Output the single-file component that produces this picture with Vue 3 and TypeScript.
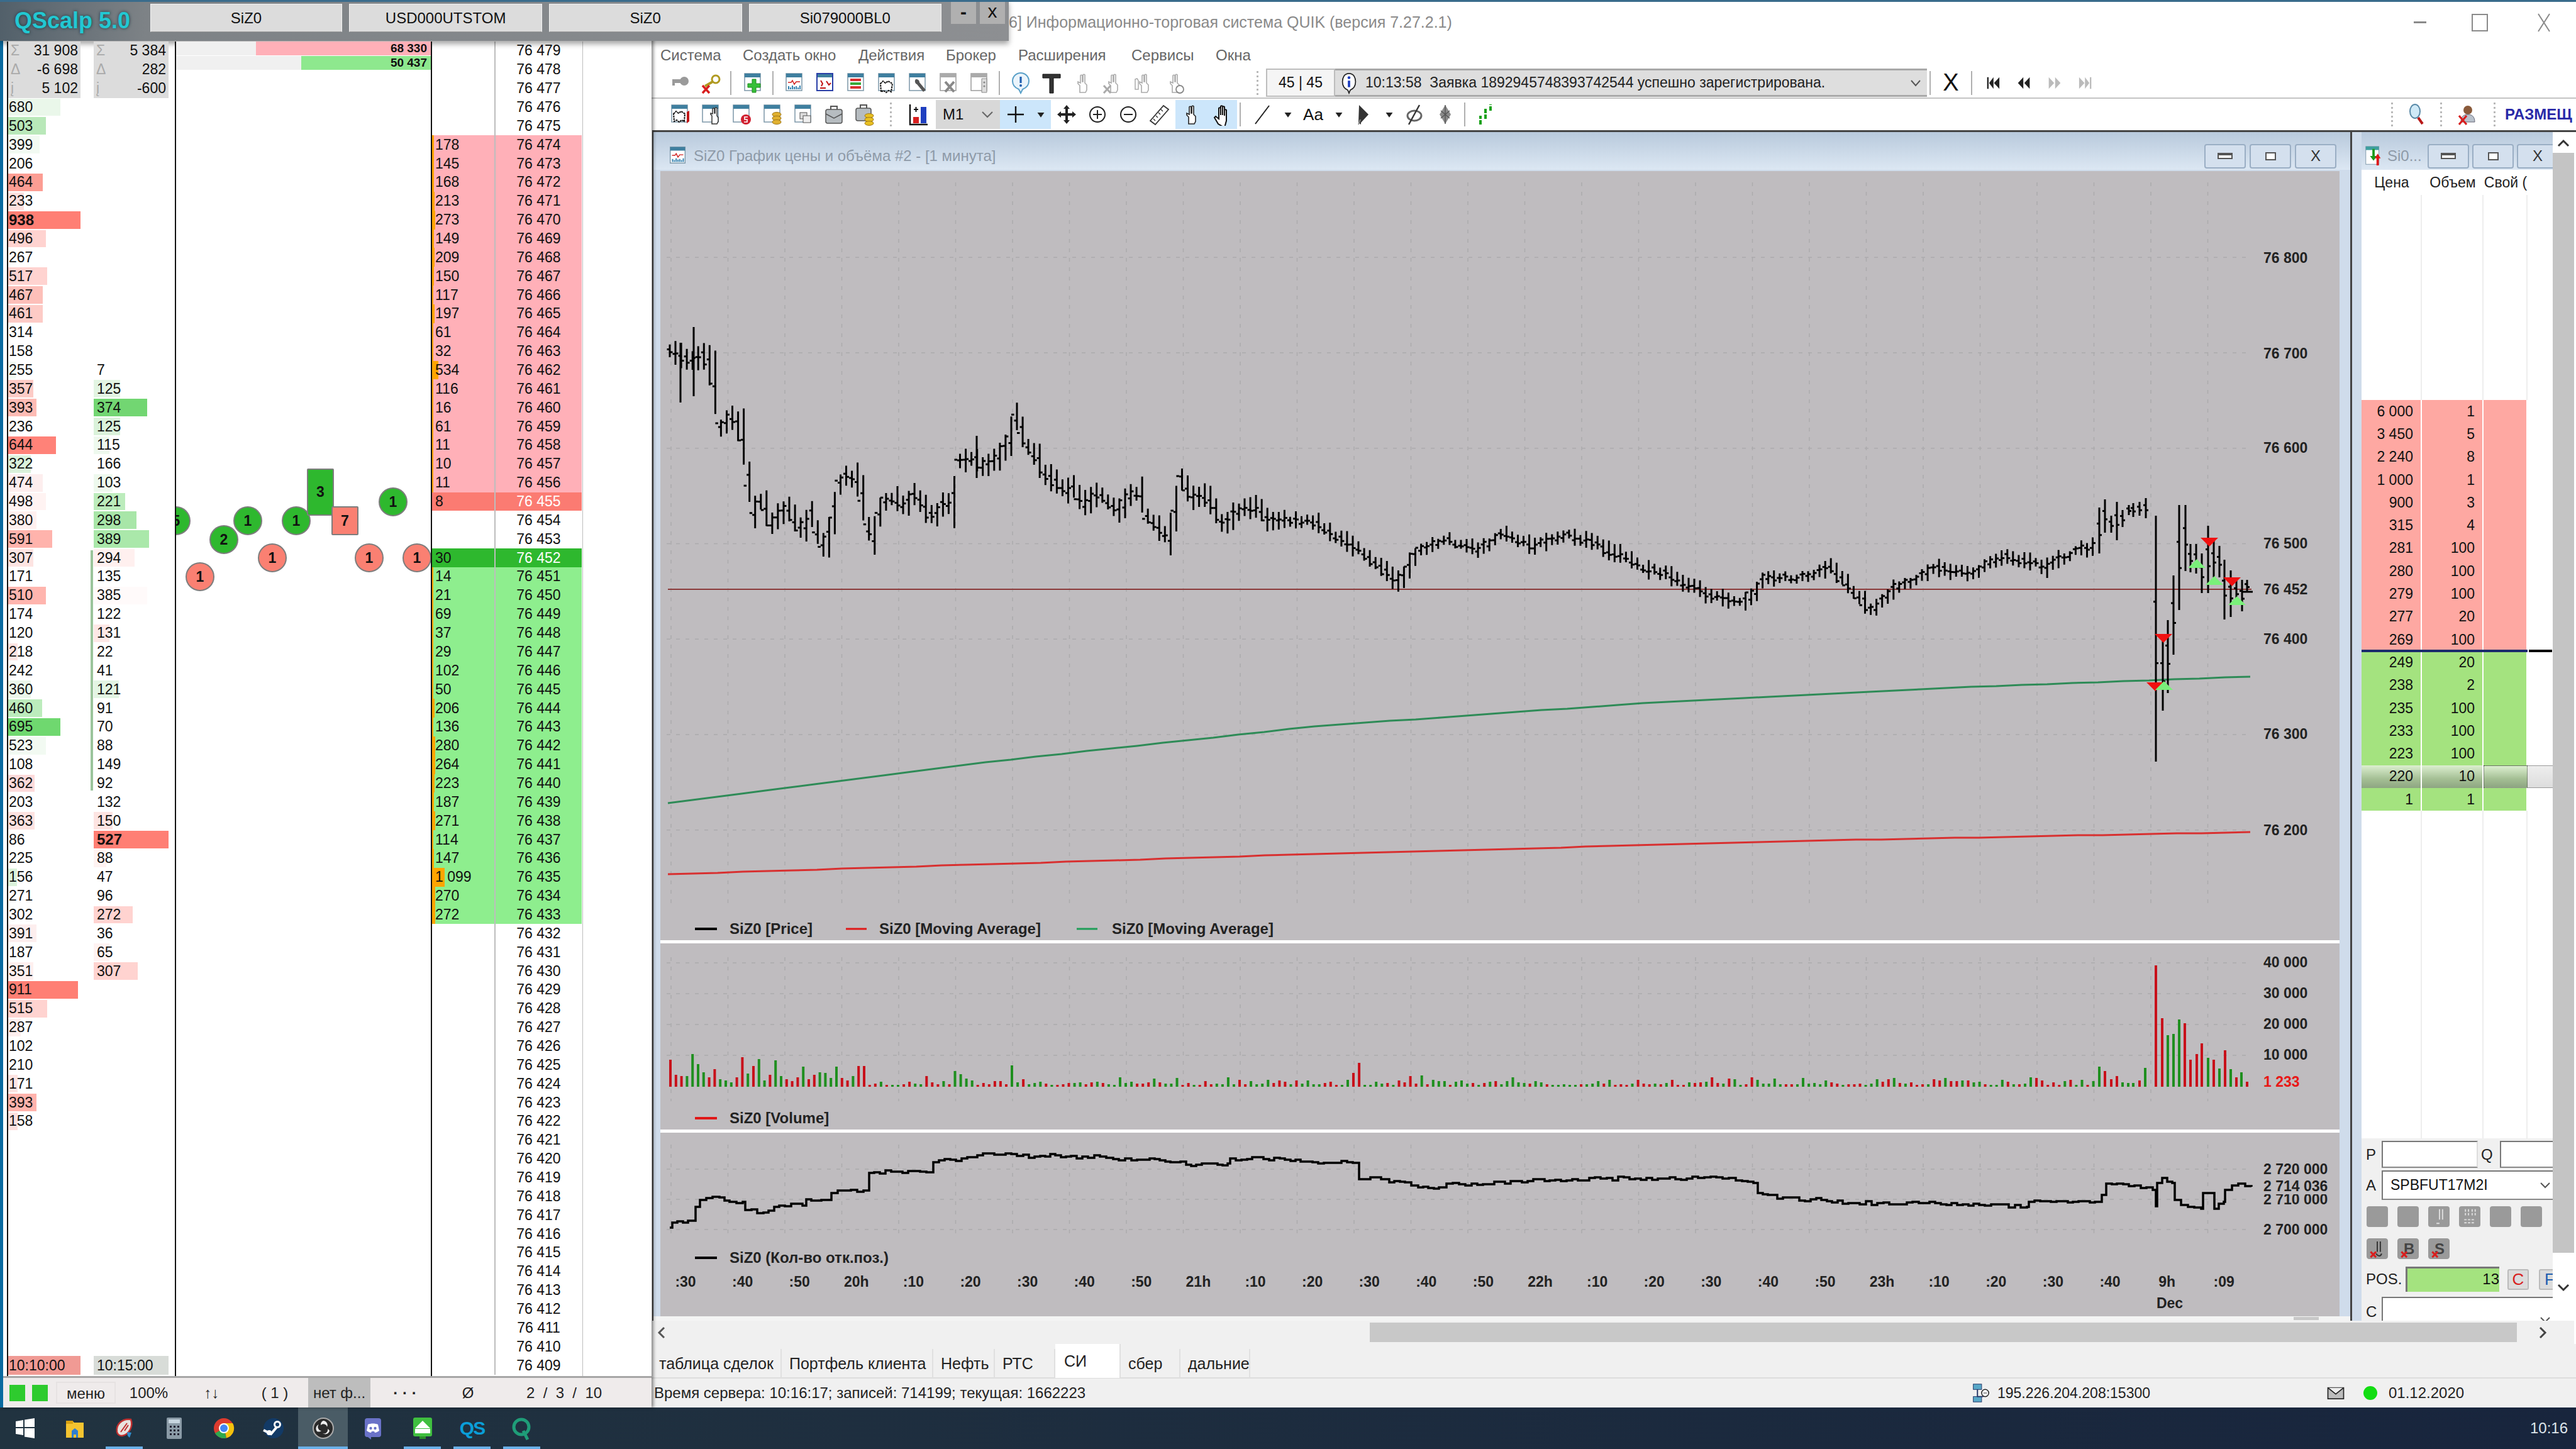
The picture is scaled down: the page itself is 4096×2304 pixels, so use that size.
<script setup lang="ts">
type Bar = [string, number?, string?, boolean?]

const RF = '#ff7f74'
const colA: Bar[] = [
  ['680', 83, '#eaf7ea'], ['503', 60, '#b9e8b9'], ['399', 50, '#f2faf2'], ['206'], ['464', 55, '#fc9d93'], ['233', 25, '#fde0de'],
  ['938', 115, RF, true], ['496', 60, '#ffd3d0'], ['267'], ['517', 62, '#ffd3d0'], ['467', 55, '#fdbfb9'], ['461', 55, '#fdcbc6'],
  ['314'], ['158'], ['255', 12, '#f2faf2'], ['357', 40, '#fdcbc6'], ['393', 45, '#fdbbb4'], ['236'], ['644', 76, '#ff8278'],
  ['322', 36, '#dbf2db'], ['474', 55, '#fdeeee'], ['498', 60, '#fff3f2'], ['380', 45, '#fff0ef'], ['591', 70, '#ffb3ac'],
  ['307', 40, '#fde4e2'], ['171'], ['510', 60, '#ffb5ae'], ['174'], ['120'], ['218', 15, '#fde4e2'], ['242'], ['360', 36, '#eaf7ea'],
  ['460', 54, '#bcecbc'], ['695', 83, '#6fd86f'], ['523', 60, '#f2faf2'], ['108'], ['362', 42, '#fddada'], ['203'], ['363', 42, '#fde2e0'],
  ['86'], ['225'], ['156', 14, '#dbf2db'], ['271'], ['302'], ['391', 45, '#fdeeee'], ['187'], ['351', 40, '#fff0ef'], ['911', 111, RF],
  ['515', 62, '#ffd3d0'], ['287', 20, '#fdeeee'], ['102'], ['210'], ['171', 15, '#fde4e2'], ['393', 45, '#ffb3ac'], ['158', 15, '#fde0de'],
]
const colB: Bar[] = [
  ['7'], ['125', 42, '#e3f5e3'], ['374', 85, '#72d672'], ['125', 42, '#daf2da'], ['115', 25, '#eef9ee'], ['166'], ['103', 30, '#eef9ee'],
  ['221', 50, '#bcecbc'], ['298', 68, '#a8e6a8'], ['389', 88, '#aae8aa'], ['294', 65, '#fff0ef'], ['135'], ['385', 85, '#fffafa'], ['122'],
  ['131', 25, '#fde8e6'], ['22'], ['41'], ['121', 40, '#e3f5e3'], ['91'], ['70'], ['88'], ['149'], ['92'], ['132'], ['150', 30, '#fde4e2'],
  ['527', 119, RF, true], ['88', 20, '#fff3f2'], ['47'], ['96'], ['272', 62, '#ffd3d0'], ['36'], ['65', 25, '#fff3f2'], ['307', 70, '#ffd3d0'],
]

type Cell = { v: string; w?: number; color?: string; bold?: boolean; kind?: string; sym?: string }
const ROWS = 71
const cellAt = (list: Bar[], offset: number, i: number): Cell => {
  const b = list[i - offset]
  return b ? { v: b[0], w: b[1], color: b[2], bold: b[3] } : { v: '' }
}
const sumA = ['31 908', '-6 698', '5 102']
const sumB = ['5 384', '282', '-600']
const syms = ['Σ', 'Δ', 'į']
const leftCells: Cell[] = []
for (let i = 0; i < ROWS; i++) {
  if (i < 3) {
    leftCells.push({ v: sumA[i], kind: 'sum', sym: syms[i] }, { v: sumB[i], kind: 'sum', sym: syms[i] })
  } else if (i === ROWS - 1) {
    leftCells.push({ v: '10:10:00', kind: 'time-red' }, { v: '10:15:00', kind: 'time-gray' })
  } else {
    leftCells.push(cellAt(colA, 3, i), { ...cellAt(colB, 17, i), kind: 'colb' })
  }
}

const fmt = (n: number) => String(n).replace(/\B(?=(\d{3})+$)/g, ' ')

const sellVol = [178, 145, 168, 213, 273, 149, 209, 150, 117, 197, 61, 32, 534, 116, 16, 61, 11, 10, 11]
const buyVol = [14, 21, 69, 37, 29, 102, 50, 206, 136, 280, 264, 223, 187, 271, 114, 147, 1099, 270, 272]
const ladder = Array.from({ length: ROWS }, (_, i) => {
  const price = 76479 - i
  let cls = ''
  let vol = 0
  if (price <= 76474 && price >= 76456) { cls = 'ask'; vol = sellVol[76474 - price] }
  else if (price === 76455) { cls = 'best-ask'; vol = 8 }
  else if (price === 76452) { cls = 'best-bid'; vol = 30 }
  else if (price <= 76451 && price >= 76433) { cls = 'bid'; vol = buyVol[76451 - price] }
  const mark = vol > 8 && cls !== 'best-bid' ? Math.max(2, Math.round((vol / 1099) * 20)) : 0
  return { price: fmt(price), cls, vol: vol ? fmt(vol) : '', mark }
})

const GREEN = '#2eb82e'
const SALMON = '#fa8072'
const pins = [
  { t: '5', x: 279, y: 828, g: 1 }, { t: '1', x: 317, y: 917, g: 0 }, { t: '2', x: 355, y: 858, g: 1 }, { t: '1', x: 393, y: 828, g: 1 },
  { t: '1', x: 432, y: 887, g: 0 }, { t: '1', x: 470, y: 828, g: 1 }, { t: '1', x: 586, y: 887, g: 0 }, { t: '1', x: 624, y: 798, g: 1 },
  { t: '1', x: 662, y: 887, g: 0 },
].map(p => ({
  label: p.t,
  style: { left: p.x - 279 - 23 + 'px', top: p.y - 66 - 23 + 'px', background: p.g ? GREEN : SALMON },
}))
const blocks = [
  { t: '3', style: { left: '208px', top: '679px', width: '43px', height: '75px', background: GREEN } },
  { t: '7', style: { left: '247px', top: '739px', width: '43px', height: '46px', background: SALMON } },
]

// ---- chart ----
let seed = 77
const rnd = () => (seed = (seed * 16807) % 2147483647) / 2147483647

const z12: [number, number][] = [
  [40, 240], [100, 280], [130, 260], [155, 400], [160, 610], [200, 550], [225, 650], [235, 830], [255, 1030], [270, 920], [295, 1060], [310, 1020],
  [340, 980], [370, 1100], [395, 1010], [420, 1170], [440, 1110], [470, 830], [515, 850], [530, 1040], [545, 1150], [570, 960], [600, 930], [625, 980],
  [650, 920], [690, 1010], [700, 1040], [720, 970], [750, 960], [760, 760], [800, 740], [820, 790], [860, 740], [885, 670], [905, 550], [935, 700],
  [960, 750], [975, 820], [1030, 900], [1045, 870], [1070, 970], [1110, 910], [1165, 1010], [1180, 930], [1215, 900], [1225, 1010], [1270, 1100],
  [1285, 1120], [1300, 1030], [1310, 820], [1340, 930], [1380, 920], [1420, 1070], [1470, 980], [1510, 980], [1535, 1050], [1568, 1040],
]
const rest: [number, number][] = [
  [781, 316], [800, 318], [820, 330], [835, 340], [852, 355], [865, 335], [880, 328], [900, 335], [915, 325], [935, 332], [955, 326], [975, 332],
  [1000, 345], [1015, 350], [1040, 362], [1062, 368], [1075, 352], [1095, 352], [1115, 345], [1140, 372], [1155, 358], [1180, 345], [1200, 350],
  [1220, 338], [1245, 345], [1265, 335], [1277, 332],
]
const ctrl: [number, number][] = [
  ...z12.map(([a, b]): [number, number] => [1040 + a / 1.568, 480 + b / 3]),
  ...rest.map(([a, b]): [number, number] => [a * 2.612, b * 2.612]),
]
const interp = (pts: [number, number][], x: number) => {
  for (let i = 1; i < pts.length; i++) {
    if (x <= pts[i][0]) {
      const [x0, y0] = pts[i - 1]
      const [x1, y1] = pts[i]
      return y0 + ((x - x0) / (x1 - x0)) * (y1 - y0)
    }
  }
  return pts[pts.length - 1][1]
}
const lastBars: [number, number, number][] = [
  [3338, 807, 880], [3347, 794, 847], [3357, 820, 847], [3366, 798, 859], [3375, 811, 838], [3385, 803, 819], [3392, 800, 822], [3402, 798, 820], [3412, 792, 824],
  [3428, 820, 1211], [3439, 1014, 1130], [3447, 986, 1102], [3456, 915, 1041], [3465, 803, 970], [3475, 803, 908], [3483, 865, 910], [3492, 865, 912],
  [3501, 880, 943], [3511, 836, 943], [3520, 859, 918], [3529, 868, 918], [3537, 890, 985], [3547, 907, 981], [3556, 922, 960], [3565, 922, 972], [3573, 922, 941],
]
let pricePath = ''
for (let x = 1065; x < 3332; x += 9.05) {
  const jitter = (rnd() - 0.5) * (x < 2040 ? 4 : 7)
  const c = interp(ctrl, x) + jitter
  const next = interp(ctrl, x + 9) + jitter
  const slope = Math.abs(next - c)
  const amp = (x < 2040 ? 7 + rnd() * 12 : 5 + rnd() * 9) + slope * 0.5
  const o = c + (rnd() - 0.5) * amp * 0.7
  const cl = next + (rnd() - 0.5) * amp * 0.5
  const xx = x.toFixed(1)
  pricePath += `M${xx} ${(c - amp).toFixed(1)}V${(c + amp).toFixed(1)}M${(x - 4.5).toFixed(1)} ${o.toFixed(1)}H${xx}M${xx} ${cl.toFixed(1)}H${(x + 4.5).toFixed(1)}`
}
pricePath += 'M1103 520V630M1553 693V760M1082 545V640'
for (const [x, hi, lo] of lastBars) {
  const o = hi + (lo - hi) * 0.35
  const cl = hi + (lo - hi) * 0.6
  pricePath += `M${x} ${hi}V${lo}M${x - 4} ${o}H${x}M${x} ${cl}H${x + 4}`
}
pricePath += 'M3565 941H3582'

const mark = (x: number, y: number, dir: number) => {
  return dir < 0 ? `${x - 14},${y} ${x + 14},${y} ${x},${y + 14}` : `${x - 14},${y + 14} ${x + 14},${y + 14} ${x},${y}`
}
const redMarks = [mark(3513, 855, -1), mark(3549, 918, -1), mark(3440, 1008, -1), mark(3427, 1085, -1)]
const greenMarks = [mark(3493, 889, 1), mark(3521, 916, 1), mark(3557, 948, 1), mark(3441, 1083, 1)]

const stepLine = (pts: number[][]) => {
  let d = `M${pts[0][0]} ${pts[0][1]}`
  for (let i = 1; i < pts.length; i++) {
    const [x0, y0] = pts[i - 1]
    const [x1, y1] = pts[i]
    const n = Math.max(1, Math.round((x1 - x0) / 40))
    for (let k = 1; k <= n; k++) {
      const xa = x0 + ((x1 - x0) * k) / n
      const ya = y0 + ((y1 - y0) * k) / n
      d += `L${xa.toFixed(0)} ${ya.toFixed(0)}`
    }
  }
  return d
}
const maGreen = stepLine([[1062, 1277], [1567, 1212], [2090, 1155], [2612, 1118], [3134, 1092], [3578, 1076]])
const maRed = stepLine([[1062, 1390], [2090, 1358], [2873, 1337], [3578, 1323]])

const hGrid = [76800, 76700, 76600, 76500, 76400, 76300, 76200].map(p => 864.5 + (76500 - p) * 1.5175)
const priceLabels = [
  { t: '76 800', y: 410 }, { t: '76 700', y: 562 }, { t: '76 600', y: 712 }, { t: '76 500', y: 864 }, { t: '76 452', y: 937 },
  { t: '76 400', y: 1016 }, { t: '76 300', y: 1167 }, { t: '76 200', y: 1320 },
]
const vGrid = Array.from({ length: 28 }, (_, i) => 1067 + 90.5 * i)
const volGrid = [1531, 1580, 1629, 1678]
const oiGrid = [1859, 1907, 1955]
const timeText = [':30', ':40', ':50', '20h', ':10', ':20', ':30', ':40', ':50', '21h', ':10', ':20', ':30', ':40', ':50', '22h', ':10', ':20', ':30', ':40', ':50', '23h', ':10', ':20', ':30', ':40', '9h', ':09']
const timeLabels = timeText.map((t, i) => ({ t, x: 1090 + 90.6 * i }))

const startVol: [number, number][] = [
  [43, 0], [19, 0], [17, 0], [17, 1], [52, 1], [36, 1], [23, 1], [15, 0], [28, 0], [12, 1], [10, 1], [7, 1], [15, 0], [47, 0], [21, 1], [33, 0], [44, 1], [10, 1], [19, 0],
  [42, 1], [17, 1], [12, 0], [9, 0], [15, 0], [32, 1], [12, 0], [19, 0], [23, 1], [22, 1], [14, 1], [32, 1], [14, 0], [10, 0], [17, 1], [33, 0], [33, 0],
]
const endVol: [number, number, number][] = [
  [3338, 32, 1], [3347, 25, 0], [3357, 12, 0], [3366, 17, 0], [3375, 7, 1], [3384, 6, 1], [3392, 6, 1], [3402, 10, 0], [3411, 30, 1], [3428, 193, 0], [3438, 109, 0],
  [3447, 82, 1], [3456, 84, 1], [3465, 107, 1], [3474, 101, 0], [3483, 43, 0], [3493, 52, 0], [3501, 69, 0], [3511, 46, 1], [3520, 43, 0], [3529, 29, 1], [3538, 58, 0],
  [3547, 28, 1], [3556, 15, 0], [3564, 23, 1], [3573, 8, 0],
]
const spikes: [number, number, number][] = [[2159, 38, 0], [2150, 22, 0], [1609, 34, 1], [1518, 25, 1], [1527, 20, 1], [1470, 17, 0], [1869, 14, 1], [1955, 15, 1], [1785, 15, 1], [2245, 17, 0], [2265, 18, 1], [2870, 14, 1], [2988, 12, 1], [3015, 14, 1], [2790, 15, 0]]
let volRed = ''
let volGreen = ''
const addVol = (x: number, h: number, g: number) => {
  const d = `M${x.toFixed(1)} 1728v${-h}`
  if (g) volGreen += d
  else volRed += d
}
startVol.forEach(([h, g], i) => addVol(1066 + 8.8 * i, h, g))
for (let x = 1066 + 8.8 * 36; x < 3332; x += 9.05) {
  const s = spikes.find(p => Math.abs(p[0] - x) < 4.6)
  if (s) addVol(x, s[1], s[2])
  else addVol(x, Math.round(3 + rnd() * rnd() * 13), rnd() < 0.5 ? 1 : 0)
}
endVol.forEach(([x, h, g]) => addVol(x, h, g))

const z9oi = [
  [30, 930], [35, 915], [75, 910], [80, 870], [88, 850], [125, 842], [145, 855], [170, 855], [175, 878], [210, 885], [240, 865], [285, 865], [292, 848], [330, 850],
  [340, 830], [365, 822], [402, 822], [412, 772], [465, 767], [522, 770], [535, 740], [590, 730], [620, 720], [685, 717], [730, 725], [760, 717], [810, 730], [855, 725],
  [880, 732], [950, 730], [1000, 740], [1030, 752], [1060, 745], [1100, 745], [1105, 730], [1200, 730], [1240, 738], [1340, 742], [1352, 790], [1405, 790], [1410, 798],
  [1440, 798], [1465, 813], [1505, 813], [1520, 802], [1568, 802],
].map(([a, b]) => [1040 + a / 1.206, 1440 + b / 1.815])
const z10oi = [
  [0, 785], [70, 785], [100, 795], [125, 800], [135, 830], [170, 835], [180, 845], [280, 850], [340, 858], [500, 858], [650, 865], [745, 870], [750, 855], [900, 855],
  [915, 835], [925, 803], [950, 803], [1030, 820], [1038, 868], [1040, 800], [1052, 785], [1075, 800], [1080, 850], [1110, 870], [1140, 875], [1145, 830], [1160, 830],
  [1170, 875], [1192, 855], [1195, 820], [1225, 803], [1255, 812],
].map(([a, b]) => [2700 + a / 1.4255, 1440 + b / 1.815])
const oiPts = [...z9oi, [2500, 1875], ...z10oi]
let oiPath = `M${oiPts[0][0].toFixed(0)} ${oiPts[0][1].toFixed(0)}`
for (let i = 1; i < oiPts.length; i++) {
  const [x0, y0] = oiPts[i - 1]
  const [x1, y1] = oiPts[i]
  const n = Math.max(1, Math.round((x1 - x0) / 9))
  for (let k = 1; k <= n; k++) {
    const wob = k < n ? (rnd() - 0.5) * 6 : 0
    oiPath += `H${(x0 + ((x1 - x0) * k) / n).toFixed(0)}V${(y0 + ((y1 - y0) * k) / n + wob).toFixed(0)}`
  }
}

// ---- right panel ----
const askRows = [['6 000', '1'], ['3 450', '5'], ['2 240', '8'], ['1 000', '1'], ['900', '3'], ['315', '4'], ['281', '100'], ['280', '100'], ['279', '100'], ['277', '20'], ['269', '100']]
const bidRows = [['249', '20'], ['238', '2'], ['235', '100'], ['233', '100'], ['223', '100']]

// ---- icons ----
const W = '<rect x="5" y="3" width="25" height="27" fill="#fff" stroke="#7c97a8" stroke-width="1.5"/><rect x="5" y="3" width="25" height="6" fill="#3f7f9f"/>'
const hand = (c: string) => `<path d="M14 33V22l-3-3v-3l4 2V6a2 2 0 0 1 3 0v10h1V5a2 2 0 0 1 3 0v13l3 3v8l-2 4z" fill="#fff" stroke="${c}" stroke-width="1.6"/>`
const xMark = '<path d="M5 22l11 12M16 22L5 34" stroke="#d81e1e" stroke-width="3.4"/>'
const win = (body: string) => W + body
const ic: Record<string, string> = {
  key: '<circle cx="25" cy="15" r="7" fill="#9a9a9a"/><rect x="6" y="12" width="16" height="6" fill="#9a9a9a"/><rect x="6" y="17" width="4" height="5" fill="#9a9a9a"/>',
  keyx: '<circle cx="26" cy="12" r="6" fill="#fff" stroke="#b09a20" stroke-width="3"/><path d="M21 16L9 23" stroke="#b09a20" stroke-width="4"/>' + xMark,
  plus: win('<path d="M17 12h6v7h7v6h-7v8h-6v-8h-7v-6h7z" fill="#38c038" stroke="#1c8a1c"/>'),
  wave: win('<path d="M8 17h5l2-3 3 6 3-4h6" fill="none" stroke="#d02020" stroke-width="1.5"/><path d="M9 28v-5M12 28v-3M15 28v-6M18 28v-4M21 28v-5M24 28v-3M27 28v-6" stroke="#3080b0" stroke-width="2"/>'),
  panic: win('<path d="M11 14l3 5-2 4M20 15l4 6 3-3M19 26h-9" fill="none" stroke="#c01010" stroke-width="2"/><rect x="5" y="3" width="25" height="27" fill="none" stroke="#2a3fa8" stroke-width="2"/>'),
  stack: win('<rect x="9" y="11" width="17" height="4" fill="#d83030"/><rect x="9" y="17" width="17" height="4" fill="#38a838"/><rect x="9" y="23" width="17" height="4" fill="#d83030"/>'),
  cube: win('<path d="M8 19l4-4 4 3 4-3 7 4-2 13-4-2-4 3-4-3-4 2z" fill="none" stroke="#111" stroke-width="2" stroke-dasharray="3 1"/>'),
  wrench: win('<path d="M15 12a5 5 0 0 0 2 8l10 12 4-3-10-12a5 5 0 0 0-6-5z" fill="#555"/>'),
  xwin: '<rect x="5" y="3" width="25" height="27" fill="#fff" stroke="#9a9a9a" stroke-width="1.5"/><rect x="5" y="3" width="25" height="6" fill="#aaa"/><path d="M13 16l14 16M27 16L13 32" stroke="#888" stroke-width="4"/>',
  copy: '<rect x="5" y="3" width="25" height="27" fill="#fff" stroke="#9a9a9a" stroke-width="1.5"/><rect x="5" y="3" width="25" height="6" fill="#aaa"/><path d="M22 11h8v22h-8z" fill="#ddd" stroke="#888"/><circle cx="26" cy="17" r="1.6" fill="#888"/><circle cx="26" cy="23" r="1.6" fill="#888"/>',
  alert: '<path d="M18 2a13 13 0 0 1 13 13c0 7-5 11-10 13l-3 6-3-6C10 26 5 22 5 15A13 13 0 0 1 18 2z" fill="#eaf4fb" stroke="#5aa0c8" stroke-width="2"/><rect x="16.4" y="8" width="3.2" height="10" fill="#1f5fb0"/><circle cx="18" cy="22" r="2" fill="#1f5fb0"/>',
  t: '<path d="M4 4h28v6H21v24h-6V10H4z" fill="#333" stroke="#111"/>',
  h1: hand('#aaa'), h2: hand('#aaa') + '<path d="M3 22l11 12M14 22L3 34" stroke="#aaa" stroke-width="3"/>',
  h3: hand('#aaa') + '<path d="M4 28V12l3-1 2 3v14z" fill="#fff" stroke="#aaa" stroke-width="1.5"/>',
  h4: hand('#aaa') + '<circle cx="26" cy="28" r="6" fill="#fff" stroke="#888" stroke-width="1.8"/>',
  mask: win('<path d="M8 17l4-4 4 3 4-3 6 4-1 12-4-2-4 3-4-3-4 2z" fill="none" stroke="#111" stroke-width="2" stroke-dasharray="3 1"/><path d="M29 14l4-2v17l-4 3z" fill="#c01818"/>'),
  winhand: win('<path d="M20 33V20l-2-2v-2l3 1V9a1.6 1.6 0 0 1 3 0v7h1V8a1.6 1.6 0 0 1 3 0v12l2 3v6l-2 4z" fill="#fff" stroke="#333" stroke-width="1.5"/>'),
  winmoney: win('<circle cx="25" cy="26" r="8" fill="#d01e2e"/><path d="M28 22h-5v4h4v4h-5" fill="none" stroke="#fff" stroke-width="1.6"/>'),
  coins: win('<ellipse cx="25" cy="18" rx="7" ry="3.6" fill="#e0b030" stroke="#a07818"/><ellipse cx="25" cy="24" rx="7" ry="3.6" fill="#e0b030" stroke="#a07818"/><ellipse cx="25" cy="30" rx="7" ry="3.6" fill="#e0b030" stroke="#a07818"/>'),
  boxes: win('<rect x="13" y="15" width="11" height="10" fill="#ddd" stroke="#555"/><rect x="18" y="20" width="12" height="11" fill="#eee" stroke="#555"/>'),
  case: '<path d="M13 10V5h10v5" fill="none" stroke="#555" stroke-width="2"/><rect x="5" y="10" width="26" height="22" rx="3" fill="#b6bcc0" stroke="#555" stroke-width="1.5"/><path d="M5 17l13 7 13-7" fill="none" stroke="#555" stroke-width="1.5"/>',
  casecoins: '<path d="M11 8V3h10v5" fill="none" stroke="#555" stroke-width="2"/><rect x="4" y="8" width="24" height="20" rx="3" fill="#b6bcc0" stroke="#555" stroke-width="1.5"/><ellipse cx="25" cy="20" rx="7" ry="3.4" fill="#e8c020" stroke="#a07818"/><ellipse cx="25" cy="26" rx="7" ry="3.4" fill="#e8c020" stroke="#a07818"/><ellipse cx="25" cy="32" rx="7" ry="3.4" fill="#e8c020" stroke="#a07818"/>',
  barchart: '<path d="M4 2v32h28" fill="none" stroke="#111" stroke-width="2.4"/><rect x="9" y="22" width="9" height="10" fill="#d81e1e"/><rect x="21" y="6" width="9" height="26" fill="#1f3fc0"/><path d="M10 10h7M13.5 6v8" stroke="#111" stroke-width="2"/>',
  cross: '<path d="M18 5v26M5 18h26" stroke="#111" stroke-width="2.4"/>',
  drop: '<path d="M11 14h14l-7 10z" fill="#222"/>',
  move: '<path d="M18 3l5 6h-3v7h7v-3l6 5-6 5v-3h-7v7h3l-5 6-5-6h3v-7H9v3l-6-5 6-5v3h7V9h-3z" fill="#222"/>',
  zin: '<circle cx="18" cy="18" r="12" fill="#fff" stroke="#222" stroke-width="2"/><path d="M18 11v14M11 18h14" stroke="#222" stroke-width="2"/>',
  zout: '<circle cx="18" cy="18" r="12" fill="#fff" stroke="#222" stroke-width="2"/><path d="M11 18h14" stroke="#222" stroke-width="2"/>',
  ruler: '<path d="M25 4l8 6-21 24-8-6z" fill="#fff" stroke="#333" stroke-width="1.8"/><path d="M21 10l3 3M17 15l3 3M13 20l3 3M9 25l3 3" stroke="#333" stroke-width="1.4"/>',
  hblack: hand('#222'),
  palm: '<path d="M12 33l-6-10 2-2 5 4V8a2 2 0 0 1 3 0v11-14a2 2 0 0 1 3 0v14-13a2 2 0 0 1 3 0v14-9a2 2 0 0 1 3 0v17l-3 11z" fill="#fff" stroke="#111" stroke-width="2"/>',
  line: '<path d="M6 33L28 4" stroke="#222" stroke-width="2"/>',
  flag: '<path d="M10 3l15 15-12 13v3l-4-3z" fill="#333"/><path d="M12 26l-3 8" stroke="#888" stroke-width="2"/>',
  slash: '<ellipse cx="18" cy="20" rx="11" ry="8" fill="none" stroke="#666" stroke-width="3"/><path d="M26 3L9 34" stroke="#333" stroke-width="2.4"/>',
  diam: '<path d="M18 3l9 15-9 15-9-15z" fill="#8a8a8a"/><path d="M18 3v30M11 12l14 12M11 24l14-12" stroke="#555" stroke-width="1.4"/>',
  greenbars: '<path d="M7 34V20M15 25V8M23 12V2" stroke="#17a017" stroke-width="4" stroke-dasharray="7 2"/>',
  search: '<ellipse cx="16" cy="13" rx="8" ry="11" fill="#cfe9f7" stroke="#5a8aa8" stroke-width="2"/><path d="M21 23l7 10" stroke="#b81818" stroke-width="4"/>',
  person: '<circle cx="20" cy="11" r="7" fill="#8a5a3a"/><path d="M9 30c0-9 5-12 11-12s11 3 11 12z" fill="#b9c2cc" stroke="#667"/><path d="M6 20l12 14M18 20L6 34" stroke="#d81e1e" stroke-width="3.2"/>',
  first: '<path d="M6 6h3v24H6zM19 6v24l-9-12zM31 6v24l-11-12z" fill="#222"/>',
  prev: '<path d="M17 6v24L6 18zM30 6v24L19 18z" fill="#222"/>',
  next: '<path d="M6 6v24l11-12zM19 6v24l11-12z" fill="#bbb"/>',
  last: '<path d="M5 6v24l11-12zM17 6v24l9-12zM27 6h3v24h-3z" fill="#bbb"/>',
  info: '<path d="M18 2c8 0 11 7 11 14s-4 12-9 14l-2 5-2-5C11 28 7 23 7 16S10 2 18 2z" fill="#fff" stroke="#222" stroke-width="1.8"/><rect x="16" y="14" width="4" height="11" fill="#1f3fc0"/><circle cx="18" cy="9" r="2.4" fill="#1f3fc0"/>',
  server: '<rect x="6" y="3" width="14" height="9" fill="#58a8c8" stroke="#236"/><rect x="6" y="24" width="14" height="9" fill="#58a8c8" stroke="#236"/><path d="M13 12v12h10" stroke="#236" stroke-width="2" fill="none"/><circle cx="26" cy="18" r="6" fill="#fff" stroke="#222" stroke-width="1.6"/><path d="M23 18h6" stroke="#222"/>',
  mail: '<rect x="3" y="8" width="30" height="21" fill="#bcbcbc" stroke="#222" stroke-width="2"/><path d="M3 8l15 12L33 8" fill="#eee" stroke="#222" stroke-width="2"/>',
}
const t1a = ['key', 'keyx']
const t1b = ['plus']
const t1c = ['wave', 'panic', 'stack', 'cube', 'wrench', 'xwin', 'copy']
const t1d = ['alert', 't', 'h1', 'h2', 'h3', 'h4']
const t2a = ['mask', 'winhand', 'winmoney', 'coins', 'boxes', 'case', 'casecoins']
const t2b = ['move', 'zin', 'zout', 'ruler']
const menu = ['Система', 'Создать окно', 'Действия', 'Брокер', 'Расширения', 'Сервисы', 'Окна']
const tabs = ['таблица сделок', 'Портфель клиента', 'Нефть', 'РТС', 'СИ', 'сбер', 'дальние']
const qsTabs = ['SiZ0', 'USD000UTSTOM', 'SiZ0', 'Si079000BL0']
const headCols = ['Цена', 'Объем', 'Свой (']

const taskIcons = [
  { svg: '<path d="M5 9l12-2v11H5zM19 6.600l16-2.600v14H19zM5 20h12v11L5 29zM19 20h16v16l-16-2.600z" fill="#fff"/>' },
  { svg: '<path d="M6 8h10l3 3h15v24H6z" fill="#f4c430"/><rect x="6" y="8" width="11" height="5" fill="#d8a010"/><path d="M15 35V24l5-4 5 4v11h-3v-5h-4v5z" fill="#2f7fd0"/>', on: 0 },
  { svg: '<path d="M8 26C6 14 16 4 30 6c4 10-2 24-14 26-4 0-7-2-8-6z" fill="#e9e3df" stroke="#c03030" stroke-width="2.500"/><path d="M14 26l10-14M20 24l6-9" stroke="#c03030" stroke-width="2"/><path d="M24 26l7 1-3 8-3-3z" fill="#2f8fd0"/>', on: 1 },
  { svg: '<rect x="8" y="3" width="24" height="34" rx="2" fill="#8a9aa6"/><rect x="11" y="6" width="18" height="6" fill="#c7d6e0"/><path d="M13 16h3v3h-3zM19 16h3v3h-3zM25 16h3v3h-3zM13 22h3v3h-3zM19 22h3v3h-3zM25 22h3v3h-3zM13 28h3v3h-3zM19 28h3v3h-3zM25 28h3v3h-3z" fill="#223"/>', on: 0 },
  { svg: '<circle cx="20" cy="20" r="16" fill="#dd3b2e"/><path d="M20 20L6 28A16 16 0 0 0 24 35.500z" fill="#2ea84f"/><path d="M20 12h14A16 16 0 0 1 24 35.500z" fill="#f4c20d"/><circle cx="20" cy="20" r="8" fill="#fff"/><circle cx="20" cy="20" r="6" fill="#4285f4"/>', on: 0 },
  { svg: '<circle cx="20" cy="20" r="16" fill="#123a66"/><path d="M4 23l12 6 10-12" fill="none" stroke="#fff" stroke-width="4"/><circle cx="26" cy="14" r="6" fill="#fff"/><circle cx="26" cy="14" r="3" fill="#123a66"/><circle cx="13" cy="27" r="4" fill="#fff"/>', on: 0 },
  { svg: '<circle cx="20" cy="20" r="16" fill="#2a2a2a" stroke="#aaa" stroke-width="2"/><path d="M20 8a7 7 0 0 1 6 10 6 6 0 0 0-10-3 7 7 0 0 1 4-7zM10 25a7 7 0 0 1 3-11 6 6 0 0 0 4 10 7 7 0 0 1-7 1zM30 24a7 7 0 0 1-11 4 6 6 0 0 0 8-7 7 7 0 0 1 3 3z" fill="#eee"/>', active: true },
  { svg: '<rect x="7" y="4" width="26" height="30" rx="4" fill="#6a72c8"/><path d="M7 30l10 8v-8z" fill="#6a72c8"/><path d="M12 14c5-2 11-2 16 0l2 10c-3 2-5 3-7 3l-1-2h-4l-1 2c-2 0-4-1-7-3z" fill="#fff"/><circle cx="16.500" cy="20" r="2.200" fill="#6a72c8"/><circle cx="23.500" cy="20" r="2.200" fill="#6a72c8"/>', on: 0 },
  { svg: '<rect x="5" y="3" width="30" height="30" rx="3" fill="#3fbf3f"/><path d="M20 8l12 12H8z" fill="#fff"/><rect x="8" y="21" width="24" height="7" fill="#fff"/><rect x="15" y="33" width="10" height="4" fill="#2a8f2a"/>', on: 1 },
  { text: 'QS', on: 1 },
  { svg: '<circle cx="19" cy="18" r="12" fill="none" stroke="#1f9d78" stroke-width="5"/><path d="M22 24l7 14" stroke="#1f9d78" stroke-width="5"/>', on: 1 },
]
</script>

<template>
  <div class="desktop">
    <div class="main">
      <section class="qscalp">
        <header class="qs-head">
          <div class="qs-title">QScalp 5.0</div>
          <button v-for="(t, i) in qsTabs" :key="i" class="qs-tab">{{ t }}</button>
          <div class="qs-ctl qs-min">-</div>
          <div class="qs-ctl">x</div>
        </header>
        <div class="qs-body">
          <div class="pair">
            <div v-for="(c, i) in leftCells" :key="i" class="cell" :class="[c.kind, { bold: c.bold }]">
              <span v-if="c.w" class="bar" :style="{ width: c.w + 'px', background: c.color }"></span>
              <span v-if="c.sym" class="sym">{{ c.sym }}</span>
              <span class="val">{{ c.v }}</span>
            </div>
            <span class="side-bar"></span>
          </div>
          <div class="mid">
            <div class="depth pink"><i></i><b>68 330</b></div>
            <div class="depth lime"><i></i><b>50 437</b></div>
            <div v-for="(p, i) in pins" :key="i" class="pin" :style="p.style">{{ p.label }}</div>
            <div v-for="(p, i) in blocks" :key="'b' + i" class="pin square" :style="p.style">{{ p.t }}</div>
          </div>
          <div class="ladder">
            <template v-for="r in ladder" :key="r.price">
              <div class="vol" :class="r.cls">
                <span v-if="r.mark" class="mark" :style="{ width: r.mark + 'px' }"></span>
                <span class="val">{{ r.vol }}</span>
              </div>
              <div class="price" :class="r.cls">{{ r.price }}</div>
            </template>
          </div>
          <div class="qs-gap"></div>
        </div>
        <footer class="qs-status">
          <span class="sq"></span><span class="sq"></span>
          <span class="s-menu">меню</span>
          <span class="s-pct">100%</span>
          <span class="s-arrows">↑↓</span>
          <span class="s-brk">( 1 )</span>
          <span class="s-file">нет ф...</span>
          <span class="s-dots">· · ·</span>
          <span class="s-null">Ø</span>
          <span class="s-pages">2 &nbsp;/&nbsp; 3 &nbsp;/&nbsp; 10</span>
        </footer>
      </section>

      <section class="quik">
        <div class="q-title">
          <span class="q-title-text">6] Информационно-торговая система QUIK (версия 7.27.2.1)</span>
          <span class="q-win">
            <i class="wmin"></i><i class="wmax"></i>
            <svg width="26" height="34" viewBox="0 0 26 34"><path d="M4 3l18 28M22 3L4 31" stroke="#8a8a8a" stroke-width="2" /></svg>
          </span>
        </div>
        <nav class="q-menu"><span v-for="m in menu" :key="m">{{ m }}</span></nav>

        <div class="tb tb1">
          <span v-for="n in t1a" :key="n" class="slot"><svg viewBox="0 0 36 36" v-html="ic[n]"></svg></span>
          <i class="sep s1"></i>
          <span v-for="n in t1b" :key="n" class="slot"><svg viewBox="0 0 36 36" v-html="ic[n]"></svg></span>
          <i class="sep s2"></i>
          <span v-for="n in t1c" :key="n" class="slot"><svg viewBox="0 0 36 36" v-html="ic[n]"></svg></span>
          <i class="sep s3"></i>
          <span v-for="n in t1d" :key="n" class="slot"><svg viewBox="0 0 36 36" v-html="ic[n]"></svg></span>
          <i class="handle h-count"></i>
          <div class="counter">45 | 45</div>
          <div class="message">
            <svg class="msg-ico" viewBox="0 0 36 36" v-html="ic.info"></svg>
            <span class="msg-text">10:13:58&nbsp; Заявка 1892945748393742544 успешно зарегистрирована.</span>
            <svg class="chev" width="20" height="14" viewBox="0 0 20 14"><path d="M3 3l7 8 7-8" fill="none" stroke="#555" stroke-width="2" /></svg>
          </div>
          <i class="sep s4"></i>
          <span class="big-x">X</span>
          <i class="sep s5"></i>
          <span class="slot nav"><svg viewBox="0 0 36 36" v-html="ic.first"></svg></span>
          <span class="slot nav"><svg viewBox="0 0 36 36" v-html="ic.prev"></svg></span>
          <span class="slot nav"><svg viewBox="0 0 36 36" v-html="ic.next"></svg></span>
          <span class="slot nav"><svg viewBox="0 0 36 36" v-html="ic.last"></svg></span>
        </div>

        <div class="tb tb2">
          <span v-for="n in t2a" :key="n" class="slot"><svg viewBox="0 0 36 36" v-html="ic[n]"></svg></span>
          <i class="handle h-two"></i>
          <span class="slot"><svg viewBox="0 0 36 36" v-html="ic.barchart"></svg></span>
          <div class="combo"><span>M1</span><svg width="22" height="14" viewBox="0 0 22 14"><path d="M3 3l8 8 8-8" fill="none" stroke="#666" stroke-width="2" /></svg></div>
          <div class="hl hl-cross">
            <span class="slot"><svg viewBox="0 0 36 36" v-html="ic.cross"></svg></span>
            <span class="slot small"><svg viewBox="0 0 36 36" v-html="ic.drop"></svg></span>
          </div>
          <span v-for="n in t2b" :key="n" class="slot"><svg viewBox="0 0 36 36" v-html="ic[n]"></svg></span>
          <div class="hl hl-hand">
            <span class="slot"><svg viewBox="0 0 36 36" v-html="ic.hblack"></svg></span>
            <span class="slot"><svg viewBox="0 0 36 36" v-html="ic.palm"></svg></span>
          </div>
          <i class="sep s6"></i>
          <span class="slot"><svg viewBox="0 0 36 36" v-html="ic.line"></svg></span>
          <span class="slot small"><svg viewBox="0 0 36 36" v-html="ic.drop"></svg></span>
          <span class="aa">Aa</span>
          <span class="slot small"><svg viewBox="0 0 36 36" v-html="ic.drop"></svg></span>
          <span class="slot"><svg viewBox="0 0 36 36" v-html="ic.flag"></svg></span>
          <span class="slot small"><svg viewBox="0 0 36 36" v-html="ic.drop"></svg></span>
          <span class="slot"><svg viewBox="0 0 36 36" v-html="ic.slash"></svg></span>
          <span class="slot"><svg viewBox="0 0 36 36" v-html="ic.diam"></svg></span>
          <i class="sep s7"></i>
          <span class="slot"><svg viewBox="0 0 36 36" v-html="ic.greenbars"></svg></span>
          <div class="tb-right">
            <i class="handle h-a"></i>
            <span class="slot"><svg viewBox="0 0 36 36" v-html="ic.search"></svg></span>
            <i class="handle h-b"></i>
            <span class="slot"><svg viewBox="0 0 36 36" v-html="ic.person"></svg></span>
            <i class="handle h-c"></i>
            <span class="place">РАЗМЕЩ</span>
          </div>
        </div>

        <div class="mdi">
          <div class="chart-win">
            <div class="win-title">
              <svg class="win-ico" viewBox="0 0 36 36" v-html="ic.wave"></svg>
              <span class="win-name">SiZ0 График цены и объёма #2 - [1 минута]</span>
              <span class="win-btns">
                <i class="wbtn"><u class="g-min"></u></i><i class="wbtn"><u class="g-max"></u></i><i class="wbtn">X</i>
              </span>
            </div>
            <div class="chart-wrap">
              <svg class="chart" width="2670" height="1821" viewBox="1050 272 2670 1821">
                <g stroke="#acaaad" stroke-width="1.5" stroke-dasharray="6 9">
                  <line v-for="y in hGrid" :key="y" x1="1060" :y1="y" x2="3580" :y2="y" />
                  <line v-for="y in volGrid" :key="y" x1="1060" :y1="y" x2="3580" :y2="y" />
                  <line v-for="y in oiGrid" :key="y" x1="1060" :y1="y" x2="3580" :y2="y" />
                  <template v-for="x in vGrid" :key="x">
                    <line :x1="x" y1="290" :x2="x" y2="1440" />
                    <line :x1="x" y1="1522" :x2="x" y2="1751" />
                    <line :x1="x" y1="1820" :x2="x" y2="1969" />
                  </template>
                </g>
                <rect x="1050" y="1495" width="2670" height="5" fill="#fff" />
                <rect x="1050" y="1796" width="2670" height="5" fill="#fff" />

                <line x1="1062" y1="937" x2="3580" y2="937" stroke="#8b3a3a" stroke-width="2" />
                <path :d="maRed" fill="none" stroke="#d83030" stroke-width="3" />
                <path :d="maGreen" fill="none" stroke="#2e8b57" stroke-width="3" />
                <path :d="pricePath" fill="none" stroke="#000" stroke-width="3" />
                <polygon v-for="p in redMarks" :key="p" :points="p" fill="#f01010" />
                <polygon v-for="p in greenMarks" :key="p" :points="p" fill="#7af07a" />

                <path :d="volRed" stroke="#c8101a" stroke-width="4" />
                <path :d="volGreen" stroke="#1f8f1f" stroke-width="4" />
                <path :d="oiPath" fill="none" stroke="#000" stroke-width="3.500" />

                <g class="ax">
                  <text v-for="l in priceLabels" :key="l.t" x="3599" :y="l.y" dy=".35em">{{ l.t }}</text>
                  <text x="3599" y="1530" dy=".35em">40 000</text>
                  <text x="3599" y="1579" dy=".35em">30 000</text>
                  <text x="3599" y="1628" dy=".35em">20 000</text>
                  <text x="3599" y="1677" dy=".35em">10 000</text>
                  <text class="red-t" x="3599" y="1720" dy=".35em">1 233</text>
                  <text x="3599" y="1859" dy=".35em">2 720 000</text>
                  <text x="3599" y="1907" dy=".35em">2 710 000</text>
                  <rect x="3595" y="1875" width="110" height="24" fill="#bfbcbf" />
                  <text x="3599" y="1886" dy=".35em">2 714 036</text>
                  <text x="3599" y="1955" dy=".35em">2 700 000</text>
                  <text v-for="(l, i) in timeLabels" :key="i" class="mid-t" :x="l.x" y="2038" dy=".35em">{{ l.t }}</text>
                  <text class="mid-t" x="3450" y="2072" dy=".35em">Dec</text>
                </g>

                <g class="leg">
                  <path d="M1105 1477h35" stroke="#000" stroke-width="4" />
                  <text x="1160" y="1477" dy=".35em">SiZ0 [Price]</text>
                  <path d="M1345 1477h33" stroke="#e01818" stroke-width="3" />
                  <text x="1398" y="1477" dy=".35em">SiZ0 [Moving Average]</text>
                  <path d="M1712 1477h33" stroke="#1f9d58" stroke-width="3" />
                  <text x="1768" y="1477" dy=".35em">SiZ0 [Moving Average]</text>
                  <path d="M1105 1778h35" stroke="#e01818" stroke-width="4" />
                  <text x="1160" y="1778" dy=".35em">SiZ0 [Volume]</text>
                  <path d="M1105 2000h35" stroke="#000" stroke-width="4" />
                  <text x="1160" y="2000" dy=".35em">SiZ0 (Кол-во отк.поз.)</text>
                </g>
              </svg>
            </div>
            <div class="mini-scroll"><i></i></div>
          </div>

          <div class="panel">
            <div class="win-title panel-title">
              <svg class="win-ico" viewBox="0 0 36 36">
                <rect x="4" y="2" width="22" height="30" fill="#fff" stroke="#7c97a8" /><rect x="4" y="2" width="22" height="6" fill="#3f9f9f" />
                <path d="M15 6v12h-4l6 8 6-8h-4V6z" fill="#1b9b1b" /><path d="M24 14l5 8h-3v12h-4V22h-3z" fill="#e01818" />
              </svg>
              <span class="win-name">Si0...</span>
              <span class="win-btns">
                <i class="wbtn"><u class="g-min"></u></i><i class="wbtn"><u class="g-max"></u></i><i class="wbtn">X</i>
              </span>
            </div>
            <div class="book">
              <div class="book-head">
                <span v-for="(h, i) in headCols" :key="i">{{ h }}</span>
              </div>
              <div class="book-blank"><i></i><i></i><i></i></div>
              <div v-for="(r, i) in askRows" :key="'a' + i" class="row ask-r">
                <span>{{ r[0] }}</span><span>{{ r[1] }}</span><span></span><em></em>
              </div>
              <div class="spread"><i></i></div>
              <div v-for="(r, i) in bidRows" :key="'b' + i" class="row bid-r">
                <span>{{ r[0] }}</span><span>{{ r[1] }}</span><span></span><em></em>
              </div>
              <div class="row sel-r"><span>220</span><span>10</span><span class="focus"></span><em></em></div>
              <div class="row bid-r"><span>1</span><span>1</span><span></span><em></em></div>
              <div class="book-blank fill"><i></i><i></i><i></i></div>
            </div>
            <form class="order" @submit.prevent>
              <div class="f-row">
                <label class="lb">P</label><input class="inp p" />
                <label class="lb q">Q</label><input class="inp qv" />
              </div>
              <div class="f-row">
                <label class="lb">A</label>
                <div class="inp sel">SPBFUT17M2I
                  <svg width="18" height="12" viewBox="0 0 18 12"><path d="M2 2l7 7 7-7" fill="none" stroke="#555" stroke-width="2" /></svg>
                </div>
              </div>
              <div class="btns">
                <i></i><i></i>
                <i><svg viewBox="0 0 34 34"><path d="M18 5v17M23 5v17M13 28h5" stroke="#ddd" stroke-width="2" /></svg></i>
                <i><svg viewBox="0 0 34 34"><path d="M10 5v12M15 5v12M21 5v12M26 5v12M8 22h18M8 27h18" stroke="#ddd" stroke-width="2" stroke-dasharray="4 2" /></svg></i>
                <i></i><i></i>
              </div>
              <div class="btns btns2">
                <i class="b-hand"><svg viewBox="0 0 34 34"><path d="M16 4v17M21 4v17M14 24c3 5 8 5 9 0" fill="none" stroke="#333" stroke-width="2" /><path d="M5 21l9 9M14 21l-9 9" stroke="#d81e1e" stroke-width="3" /></svg></i>
                <i class="b-b"><span>B</span><svg viewBox="0 0 34 34"><path d="M5 21l9 9M14 21l-9 9" stroke="#d81e1e" stroke-width="3" /></svg></i>
                <i class="b-s"><span>S</span><svg viewBox="0 0 34 34"><path d="M5 21l9 9M14 21l-9 9" stroke="#d81e1e" stroke-width="3" /></svg></i>
              </div>
              <div class="f-row pos">
                <label class="lb pos-l">POS.</label>
                <div class="pos-v">13</div>
                <span class="mini c">C</span>
                <span class="mini f">F</span>
              </div>
              <div class="f-row">
                <label class="lb">C</label>
                <div class="inp sel empty">
                  <svg width="18" height="12" viewBox="0 0 18 12"><path d="M2 2l7 7 7-7" fill="none" stroke="#555" stroke-width="2" /></svg>
                </div>
              </div>
            </form>
          </div>

          <div class="vscroll">
            <svg width="22" height="14" viewBox="0 0 22 14"><path d="M3 11l8-8 8 8" fill="none" stroke="#333" stroke-width="3" /></svg>
            <div class="vthumb"></div>
            <svg width="22" height="14" viewBox="0 0 22 14"><path d="M3 3l8 8 8-8" fill="none" stroke="#333" stroke-width="3" /></svg>
          </div>
        </div>

        <div class="hscroll">
          <svg width="14" height="22" viewBox="0 0 14 22"><path d="M11 3l-8 8 8 8" fill="none" stroke="#555" stroke-width="3" /></svg>
          <div class="hthumb"></div>
          <svg width="14" height="22" viewBox="0 0 14 22"><path d="M3 3l8 8-8 8" fill="none" stroke="#444" stroke-width="3" /></svg>
        </div>
        <div class="q-tabs">
          <span v-for="t in tabs" :key="t" class="q-tab" :class="{ on: t === 'СИ' }">{{ t }}</span>
        </div>
        <footer class="q-status">
          <span class="st-text">Время сервера: 10:16:17; записей: 714199; текущая: 1662223</span>
          <span class="st-ip">
            <svg width="34" height="34" viewBox="0 0 36 36" v-html="ic.server"></svg>195.226.204.208:15300
          </span>
          <svg class="st-mail" width="34" height="30" viewBox="0 0 36 36" v-html="ic.mail"></svg>
          <i class="st-dot"></i>
          <span class="st-date">01.12.2020</span>
        </footer>
      </section>
    </div>

    <footer class="taskbar">
      <span v-for="(t, i) in taskIcons" :key="i" class="tk" :class="{ active: t.active, on: t.on }">
        <svg v-if="t.svg" width="40" height="40" viewBox="0 0 40 40" v-html="t.svg"></svg>
        <b v-else class="qs-logo">{{ t.text }}</b>
      </span>
      <span class="clock">10:16</span>
    </footer>
  </div>
</template>

<style scoped>
.desktop {
  width: 4096px;
  height: 2304px;
  display: flex;
  flex-direction: column;
  overflow: hidden;
  font-family: "Liberation Sans", Arial, sans-serif;
  font-size: 23px;
  color: #111;
  background: #fff;
}

.main {
  flex: none;
  height: 2238px;
  display: flex;
  position: relative;
}

/* ---- QScalp window ---- */
.qscalp {
  flex: none;
  width: 1036px;
  display: flex;
  flex-direction: column;
  border-left: 5px solid #0a6aa0;
  box-sizing: border-box;
  box-shadow: 3px 0 5px rgba(0, 0, 0, 0.45);
  position: relative;
  z-index: 3;
  background: #fff;
}

.qs-head {
  position: absolute;
  left: -5px;
  top: 0;
  width: 1604px;
  height: 65px;
  display: flex;
  align-items: flex-start;
  background: linear-gradient(90deg, #52606a 0, #7d8286 230px, #8d8f92 100%);
  box-shadow: 0 5px 8px rgba(0, 0, 0, 0.35);
  border-top: 3px solid #3a6c8c;
  box-sizing: border-box;
}

.qs-title {
  width: 239px;
  box-sizing: border-box;
  padding: 9px 0 0 23px;
  font-size: 36px;
  font-weight: 700;
  color: #22c8d2;
  text-shadow: 0 0 5px #17363f;
}

.qs-tab {
  width: 307px;
  height: 45px;
  margin: 3px 11px 0 0;
  padding: 0;
  font: inherit;
  font-size: 24px;
  color: #111;
  background: #dcdcdc;
  border: 1px solid #f2f2f2;
  border-bottom-color: #999;
}

.qs-tab:first-of-type {
  width: 306px;
}

.qs-tab:nth-of-type(4) {
  margin-right: 15px;
}

.qs-ctl {
  width: 40px;
  height: 35px;
  margin-right: 6px;
  background: #b0b0b0;
  text-align: center;
  font-size: 30px;
  line-height: 30px;
  color: #111;
}

.qs-min {
  font-weight: 700;
  line-height: 32px;
}

.qs-body {
  margin-top: 66px;
  flex: 1;
  display: flex;
  min-height: 0;
  border-left: 2px solid #111;
  margin-left: 6px;
}

.pair {
  width: 265px;
  flex: none;
  display: grid;
  grid-template-columns: 115px 119px;
  grid-auto-rows: 29.87px;
  column-gap: 21px;
  position: relative;
  border-right: 2px solid #111;
  box-sizing: content-box;
}

.cell {
  position: relative;
  display: flex;
  align-items: center;
  padding-left: 1px;
  white-space: nowrap;
}

.colb {
  padding-left: 5px;
}

.cell .val {
  position: relative;
}

.bold {
  font-weight: 700;
  font-size: 24px;
}

.bar {
  position: absolute;
  left: 0;
  top: 1px;
  bottom: 1px;
}

.sum {
  background: #dcdcdc;
  justify-content: space-between;
  padding: 0 4px;
}

.sym {
  color: #aaa;
}

.time-red {
  background: #f09a94;
}

.time-gray {
  background: #d8dcd8;
  padding-left: 5px;
}

.side-bar {
  position: absolute;
  left: 131px;
  top: 809px;
  width: 4px;
  height: 382px;
  background: #9bc49b;
}

.mid {
  width: 405px;
  flex: none;
  position: relative;
  overflow: hidden;
  border-right: 2px solid #111;
}

.depth {
  height: 22px;
  margin-bottom: 1px;
  display: flex;
  justify-content: flex-end;
  align-items: center;
  background: #f0f0f0;
  position: relative;
  font-size: 19px;
}

.depth i {
  position: absolute;
  top: 0;
  bottom: 0;
  right: 0;
}

.depth b {
  position: relative;
  padding-right: 6px;
}

.pink i {
  width: 278px;
  background: #ffb0b8;
}

.lime i {
  width: 206px;
  background: #8ee88e;
}

.pin {
  position: absolute;
  width: 46px;
  height: 46px;
  box-sizing: border-box;
  border: 2px solid #7d7d7d;
  border-radius: 50%;
  display: flex;
  align-items: center;
  justify-content: center;
  font-weight: 700;
  font-size: 23px;
}

.square {
  border-radius: 2px;
}

.ladder {
  width: 239px;
  flex: none;
  display: grid;
  grid-template-columns: 99px 139px;
  grid-auto-rows: 29.87px;
  border-right: 1px solid #bdbdbd;
}

.vol {
  position: relative;
  padding-left: 5px;
  display: flex;
  align-items: center;
}

.vol .val {
  position: relative;
}

.mark {
  position: absolute;
  left: 0;
  top: 0;
  bottom: 0;
  background: #ffa500;
}

.price {
  border-left: 2px solid #bdbdbd;
  display: flex;
  align-items: center;
  justify-content: center;
}

.ask {
  background: #ffb0b8;
}

.bid {
  background: #8eee8e;
}

.best-ask {
  background: #fb7b72;
}

.best-bid {
  background: #2eb82e;
}

.price.best-ask,
.price.best-bid {
  color: #fff;
}

.qs-gap {
  flex: 1;
}

.qs-status {
  flex: none;
  height: 50px;
  box-sizing: border-box;
  display: flex;
  align-items: center;
  background: #efebeb;
  border-top: 3px solid #a6a6a6;
  padding-left: 10px;
  white-space: nowrap;
  text-align: center;
  font-size: 24px;
  color: #222;
}

.sq {
  width: 25px;
  height: 26px;
  margin-right: 11px;
  background: #2ecb2e;
}

.s-menu {
  width: 95px;
  height: 35px;
  margin-left: 2px;
  line-height: 33px;
  border: 2px solid #e6e2e2;
  box-sizing: border-box;
}

.s-pct {
  width: 105px;
}

.s-arrows {
  width: 95px;
}

.s-brk {
  width: 106px;
}

.s-file {
  width: 99px;
  align-self: stretch;
  line-height: 47px;
  background: #bdbdbd;
  overflow: hidden;
}

.s-dots {
  width: 110px;
  font-weight: 700;
}

.s-null {
  width: 90px;
}

.s-pages {
  padding-left: 48px;
}

/* ---- QUIK window ---- */
.quik {
  flex: 1;
  min-width: 0;
  display: flex;
  flex-direction: column;
  background: #fff;
  border-top: 3px solid #3a6c8c;
}

.q-title {
  height: 65px;
  display: flex;
  align-items: center;
  padding-left: 568px;
  color: #8a8a8a;
  font-size: 25px;
  flex: none;
}

.q-win {
  margin-left: auto;
  display: flex;
  align-items: center;
}

.wmin {
  width: 20px;
  height: 3px;
  margin-right: 72px;
  background: #8a8a8a;
}

.wmax {
  width: 22px;
  height: 24px;
  margin-right: 76px;
  border: 2px solid #8a8a8a;
}

.q-win svg {
  margin-right: 38px;
}

.q-menu {
  height: 40px;
  flex: none;
  display: grid;
  grid-template-columns: 131px 184px 139px 115px 180px 134px auto;
  align-items: center;
  padding-left: 14px;
  color: #666;
  font-size: 24px;
}

.tb {
  display: flex;
  align-items: center;
  flex: none;
  padding-left: 20px;
  box-sizing: border-box;
}

.tb1 {
  height: 49px;
  border-bottom: 2px solid #c4c4c4;
}

.tb2 {
  height: 50px;
}

.slot {
  width: 49px;
  height: 46px;
  flex: none;
  display: flex;
  align-items: center;
  justify-content: center;
}

.slot svg {
  width: 36px;
  height: 36px;
}

.slot.small {
  width: 31px;
}

.slot.small svg {
  width: 28px;
  height: 28px;
}

.slot.nav {
  width: 49px;
}

.slot.nav svg {
  width: 28px;
  height: 28px;
}

.sep {
  width: 2px;
  height: 38px;
  background: #b0b0b0;
  flex: none;
}

.s1 {
  margin: 0 9px 0 7px;
}

.s2 {
  margin: 0 8px 0 7px;
}

.s3 {
  margin: 0 8px 0 7px;
}

.s4 {
  margin-left: 4px;
}

.s5 {
  margin-right: 8px;
}

.s6 {
  margin: 0 10px 0 4px;
}

.s7 {
  margin: 0 10px 0 6px;
}

.handle {
  width: 3px;
  height: 42px;
  flex: none;
  background-image: radial-gradient(circle, #b8b8b8 1.4px, transparent 1.6px);
  background-size: 3px 7px;
}

.h-count {
  margin: 0 12px 0 106px;
}

.h-two {
  margin: 0 18px 0 16px;
}

.h-a {
  margin: 0 12px 0 6px;
}

.h-b {
  margin: 0 14px;
}

.h-c {
  margin: 0 15px 0 19px;
}

.counter {
  width: 110px;
  height: 45px;
  box-sizing: border-box;
  border: 2px solid #bdbdbd;
  background: #f5f5f5;
  display: flex;
  align-items: center;
  justify-content: center;
  flex: none;
}

.message {
  width: 941px;
  height: 45px;
  flex: none;
  box-sizing: border-box;
  display: flex;
  align-items: center;
  background: #dedede;
  border-top: 3px solid #a8a8a8;
  border-bottom: 3px solid #a8a8a8;
  padding-left: 5px;
}

.msg-ico {
  width: 34px;
  height: 36px;
  flex: none;
}

.msg-text {
  margin-left: 9px;
  font-size: 23px;
  white-space: nowrap;
  color: #222;
}

.chev {
  margin-left: auto;
  margin-right: 8px;
}

.big-x {
  width: 64px;
  text-align: center;
  font-size: 38px;
  color: #111;
}

.combo {
  width: 102px;
  height: 46px;
  flex: none;
  margin-left: 3px;
  display: flex;
  align-items: center;
  justify-content: space-between;
  padding: 0 9px 0 11px;
  box-sizing: border-box;
  background: #d8d8d8;
  font-size: 24px;
}

.hl {
  display: flex;
  background: #cce6fb;
  height: 46px;
  flex: none;
}

.hl-cross {
  width: 81px;
}

.hl-hand {
  width: 98px;
  margin-left: 2px;
}

.aa {
  width: 50px;
  text-align: center;
  font-size: 26px;
  flex: none;
}

.tb-right {
  margin-left: auto;
  display: flex;
  align-items: center;
  width: 300px;
  flex: none;
  overflow: hidden;
}

.place {
  color: #2a2aa8;
  font-weight: 700;
  font-size: 24px;
  white-space: nowrap;
}

.mdi {
  height: 1893px;
  flex: none;
  display: flex;
  border-top: 3px solid #444;
  box-sizing: border-box;
  margin-left: 1px;
}

.chart-win {
  width: 2703px;
  flex: none;
  display: flex;
  flex-direction: column;
  box-sizing: border-box;
  border-left: 2px solid #444;
  border-right: 3px solid #444;
  background: #cfdceb;
}

.win-title {
  height: 60px;
  flex: none;
  display: flex;
  align-items: center;
  padding: 16px 0 0 22px;
  box-sizing: border-box;
  background: linear-gradient(#b8c9dc, #dce7f3);
  color: #8e9aa8;
}

.win-ico {
  width: 34px;
  height: 36px;
  flex: none;
}

.win-name {
  margin-left: 8px;
  font-size: 24px;
  white-space: nowrap;
}

.win-btns {
  margin-left: auto;
  display: flex;
  gap: 6px;
  padding-right: 22px;
}

.wbtn {
  width: 66px;
  height: 39px;
  box-sizing: border-box;
  border: 2px solid #9aaec4;
  border-radius: 4px;
  background: #d4e0ee;
  display: flex;
  align-items: center;
  justify-content: center;
  font-style: normal;
  color: #333;
  font-size: 24px;
  flex: none;
}

.g-min {
  width: 24px;
  height: 10px;
  box-sizing: border-box;
  border: 2px solid #555;
  border-top-width: 4px;
  background: #fff;
}

.g-max {
  width: 17px;
  height: 13px;
  border: 2px solid #555;
  background: #fff;
  box-sizing: border-box;
}

.chart-wrap {
  flex: none;
  height: 1821px;
  padding: 2px 0 0 11px;
  box-sizing: content-box;
}

.chart {
  display: block;
  background: #bfbcbf;
}

.ax text {
  font-size: 23px;
  font-weight: 700;
  fill: #222;
}

.ax .mid-t {
  text-anchor: middle;
}

.ax .red-t {
  fill: #e81818;
}

.leg text {
  font-size: 24px;
  font-weight: 700;
  fill: #222;
}

.mini-scroll {
  flex: 1;
  background: #f4f4f4;
  position: relative;
}

.mini-scroll i {
  position: absolute;
  left: 2608px;
  top: 1px;
  width: 40px;
  height: 5px;
  background: #c8c8c8;
}

.panel {
  width: 319px;
  flex: none;
  display: flex;
  flex-direction: column;
  padding-left: 15px;
  box-sizing: border-box;
  background: #cfdceb;
  min-height: 0;
}

.panel-title {
  padding-left: 3px;
  overflow: hidden;
}

.panel-title .win-name {
  margin-left: 4px;
  width: 64px;
  flex: none;
}

.panel-title .wbtn {
  width: 66px;
}

.panel-title .win-btns {
  margin-left: 0;
  padding-right: 0;
  gap: 5px;
}

.book {
  height: 1540px;
  flex: none;
  background: #fff;
  display: flex;
  flex-direction: column;
}

.book-head {
  height: 40px;
  flex: none;
  display: grid;
  grid-template-columns: 96px 98px 70px 40px;
  align-items: center;
  text-align: center;
  white-space: nowrap;
  overflow: hidden;
  color: #222;
}

.book-blank {
  height: 326px;
  flex: none;
  display: grid;
  grid-template-columns: 96px 98px 70px;
}

.book-blank i {
  border-right: 2px solid #eee;
}

.book-blank.fill {
  flex: 1;
}

.row {
  height: 36.3px;
  flex: none;
  display: grid;
  grid-template-columns: 96px 98px 70px 40px;
}

.row span {
  border-right: 2px solid #fff;
  display: flex;
  align-items: center;
  justify-content: flex-end;
  padding-right: 12px;
  box-sizing: border-box;
}

.ask-r span {
  background: #fea8a2;
}

.bid-r span {
  background: #a4e37f;
}

.spread {
  height: 4px;
  margin-top: -2px;
  margin-bottom: -2px;
  position: relative;
  flex: none;
  background: #1c2b6c;
  width: 264px;
}

.spread i {
  position: absolute;
  left: 266px;
  width: 37px;
  top: 0;
  bottom: 0;
  background: #000;
}

.sel-r span {
  background: linear-gradient(#dcefd0, #a4bf94 60%, #8ea582);
}

.sel-r em {
  background: linear-gradient(#eee, #ddd);
  border-top: 1px solid #999;
  border-bottom: 1px solid #999;
}

.sel-r .focus {
  border: 1px dotted #444;
}

.order {
  flex: 1;
  min-height: 0;
  overflow: hidden;
  background: #f0f0f0;
  padding: 4px 0 0 7px;
  display: flex;
  flex-direction: column;
}

.f-row {
  display: flex;
  align-items: center;
  height: 43px;
  margin-bottom: 6px;
  flex: none;
  white-space: nowrap;
}

.lb {
  width: 25px;
  flex: none;
  font-size: 24px;
  color: #222;
}

.inp {
  height: 43px;
  box-sizing: border-box;
  border: 2px solid #777;
  border-right-color: #ddd;
  border-bottom-color: #888;
  background: #fff;
  padding: 0;
  font: inherit;
}

.inp.p {
  width: 153px;
}

.lb.q {
  margin-left: 5px;
  width: 30px;
}

.inp.qv {
  width: 84px;
  border-right: 0;
}

.sel {
  width: 272px;
  height: 47px;
  padding-left: 12px;
  display: flex;
  align-items: center;
  justify-content: space-between;
  padding-right: 3px;
  border-right: 0;
  font-size: 23px;
}

.sel.empty {
  justify-content: flex-end;
  align-items: flex-end;
  padding-bottom: 2px;
}

.btns {
  display: flex;
  gap: 15px;
  margin: 6px 0 18px 1px;
  flex: none;
}

.btns i {
  width: 34px;
  height: 33px;
  border-radius: 4px;
  background: #9a9a9a;
  flex: none;
}

.btns svg {
  display: block;
  width: 34px;
  height: 33px;
}

.btns2 {
  margin: 0 0 12px 1px;
}

.btns2 i {
  position: relative;
  border: 1px solid #999;
  box-sizing: border-box;
  font-style: normal;
  font-weight: 700;
  text-align: center;
  line-height: 31px;
  font-size: 24px;
  color: #444;
}

.btns2 span {
  position: absolute;
  left: 9px;
  top: 0;
}

.btns2 svg {
  position: absolute;
  left: 0;
  top: 0;
}

.b-hand {
  background: linear-gradient(135deg, #9fe79f 50%, #fbc9c9 50%);
}

.b-b {
  background: #9fe79f;
}

.b-s {
  background: #fbc9c9;
}

.pos {
  margin-bottom: 10px;
  height: 40px;
}

.pos-l {
  width: 63px;
}

.pos-v {
  width: 149px;
  height: 40px;
  box-sizing: border-box;
  border-top: 3px solid #777;
  border-left: 3px solid #777;
  background: #a4e37f;
  text-align: right;
  line-height: 34px;
  font-size: 24px;
  flex: none;
}

.mini {
  width: 34px;
  height: 33px;
  box-sizing: border-box;
  margin-left: 13px;
  border: 2px solid #bbb;
  border-radius: 3px;
  background: #dcdcdc;
  text-align: center;
  font-weight: 400;
  font-size: 26px;
  line-height: 29px;
  flex: none;
}

.mini.c {
  color: #d81e1e;
}

.mini.f {
  color: #1f5fb0;
  margin-left: 16px;
}

.vscroll {
  width: 34px;
  flex: none;
  display: flex;
  flex-direction: column;
  align-items: center;
  background: #fff;
  padding-top: 11px;
  box-sizing: border-box;
}

.vthumb {
  width: 34px;
  height: 1749px;
  margin: 8px 0 48px;
  flex: none;
  background: #c4c4c4;
}

.hscroll {
  height: 37px;
  flex: none;
  display: flex;
  align-items: center;
  background: #f0f0f0;
  padding-left: 9px;
  box-sizing: border-box;
  margin-right: 3px;
}

.hthumb {
  width: 1824px;
  height: 31px;
  margin-left: 1119px;
  background: #c8c8c8;
  flex: none;
}

.hscroll svg:last-child {
  margin-left: 34px;
}

.q-tabs {
  height: 55px;
  flex: none;
  box-sizing: border-box;
  display: grid;
  grid-template-columns: 207px 241px 98px 96px 104px 95px 111px;
  justify-content: start;
  align-items: end;
  background: #f0f0f0;
  border-bottom: 2px solid #ddd;
}

.q-tab {
  height: 46px;
  display: flex;
  align-items: center;
  box-sizing: border-box;
  padding-left: 12px;
  border-right: 2px solid #e0e0e0;
  color: #222;
  white-space: nowrap;
  font-size: 25px;
}

.q-tab.on {
  background: #fff;
  height: 54px;
  padding-left: 14px;
}

.q-status {
  flex: 1;
  display: flex;
  align-items: center;
  background: #f0f0f0;
  white-space: nowrap;
  color: #222;
  font-size: 24px;
}

.st-text {
  margin-left: 4px;
  width: 2092px;
  flex: none;
}

.st-ip {
  width: 565px;
  display: flex;
  align-items: center;
  gap: 10px;
  flex: none;
  font-size: 23px;
}

.st-mail {
  flex: none;
}

.st-dot {
  width: 22px;
  height: 22px;
  margin-left: 27px;
  border-radius: 50%;
  background: #12dd12;
  flex: none;
}

.st-date {
  margin-left: 18px;
}

/* ---- taskbar ---- */
.taskbar {
  flex: 1;
  display: flex;
  align-items: stretch;
  background: linear-gradient(90deg, #213340, #18253d);
}

.tk {
  width: 79px;
  flex: none;
  display: flex;
  align-items: center;
  justify-content: center;
  position: relative;
}

.tk.active {
  background: #4a5c66;
}

.tk.on::after,
.tk.active::after {
  content: '';
  position: absolute;
  left: 10px;
  right: 10px;
  bottom: 0;
  height: 4px;
  background: #6ab0e8;
}

.tk.active::after {
  left: 0;
  right: 0;
}

.qs-logo {
  color: #0a9ed8;
  font-size: 30px;
  letter-spacing: -2px;
}

.clock {
  margin-left: auto;
  margin-right: 13px;
  align-self: center;
  font-size: 24px;
  color: #dde4ea;
}
</style>

<style>
html,
body {
  margin: 0;
  padding: 0;
  background: #fff;
}
</style>
